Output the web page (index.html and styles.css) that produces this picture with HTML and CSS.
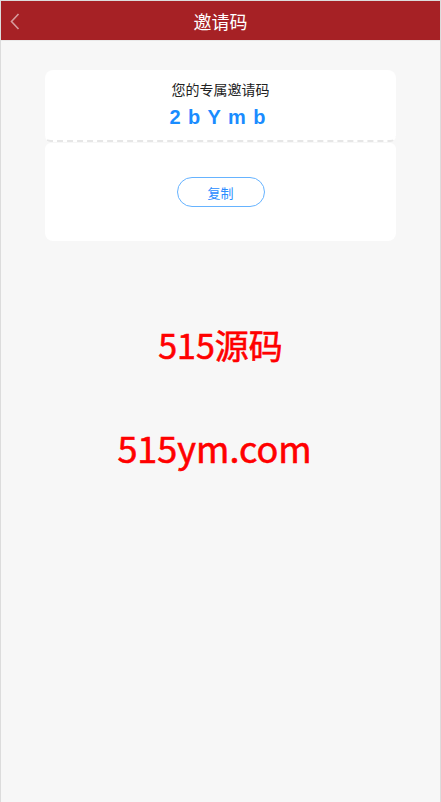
FILE: index.html
```html
<!DOCTYPE html>
<html lang="zh-CN">
<head>
    <meta charset="utf-8">
    <title>邀请码</title>
    <link rel="stylesheet" href="styles.css">
</head>
<body>
    <div class="page">
        <div class="header">
            <a class="back" href="#">
                <svg width="10" height="17" viewBox="0 0 10 17"><path d="M8.5 1 L1.5 8.5 L8.5 16" fill="none" stroke="rgba(255,255,255,0.55)" stroke-width="1.6"/></svg>
            </a>
            <h1>邀请码</h1>
        </div>
        <div class="card">
            <div class="card-top">
                <p class="label">您的专属邀请码</p>
                <p class="code">2 b Y m b</p>
            </div>
            <div class="card-bottom">
                <button class="copy-btn">复制</button>
            </div>
        </div>
        <div class="mark mark-name">515源码</div>
        <div class="mark mark-site">515ym.com</div>
    </div>
</body>
</html>
```
FILE: styles.css
```css
body {
    margin: 0;
    padding: 0;
    font-family: "Noto Sans CJK SC", "Noto Sans", sans-serif;
    background-color: #f7f7f7;
}
.page {
    box-sizing: border-box;
    height: 802px;
    border: 1px solid #dcdcdc;
    border-bottom: none;
    background-color: #f7f7f7;
}
.header {
    height: 39px;
    background-color: #a62125;
    border-bottom: 1px solid #e9e9e9;
    display: flex;
    align-items: center;
    justify-content: center;
    position: relative;
}
.back {
    position: absolute;
    left: 9px;
    top: 12px;
    display: block;
    line-height: 0;
}
.header h1 {
    margin: 0;
    color: #fff;
    font-size: 18px;
    font-weight: normal;
}
.card {
    margin: 29px 44px 0 44px;
}
.card-top {
    background: #fff;
    border-radius: 8px 8px 6px 6px;
    box-sizing: border-box;
    padding-top: 9px;
    text-align: center;
    border-bottom: 2px dashed #e6e6e6;
    height: 72px;
}
.label {
    margin: 0;
    font-size: 14px;
    line-height: 20px;
    color: #222;
}
.code {
    margin: 6px 0 0 0;
    font-family: "Liberation Sans", Arial, sans-serif;
    font-weight: bold;
    font-size: 20px;
    line-height: 24px;
    color: #1a8cff;
    word-spacing: 2px;
    padding-right: 6px;
}
.card-bottom {
    background: #fff;
    border-radius: 6px 6px 8px 8px;
    margin-top: 1px;
    padding: 34px 0;
    display: flex;
    justify-content: center;
}
.copy-btn {
    width: 88px;
    height: 30px;
    border: 1px solid #66b3ff;
    border-radius: 15px;
    background: #fff;
    color: #2a8cff;
    font-family: "Noto Sans CJK SC", sans-serif;
    font-size: 13px;
    padding: 0;
}
.mark {
    text-align: center;
    color: #ff0000;
    line-height: 48px;
    font-weight: normal;
    -webkit-text-stroke: 0.6px #ff0000;
}
.mark-name {
    margin-top: 80px;
    font-size: 34px;
}
.mark-site {
    margin-top: 54px;
    font-size: 36px;
    padding-right: 12px;
}
```
